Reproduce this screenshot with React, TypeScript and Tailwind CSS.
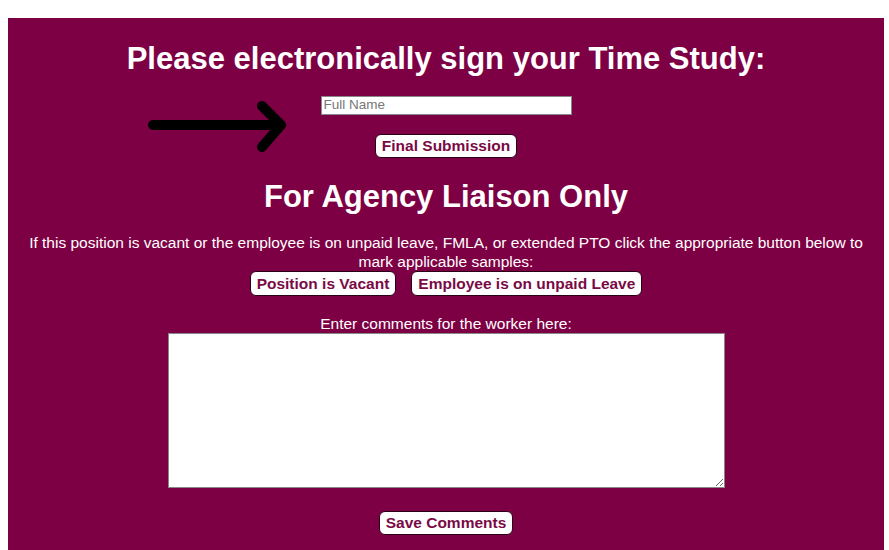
import React from "react";

const btn =
  "bg-white text-[#7a0a45] font-bold text-[15.5px] leading-[18px] px-[6px] border border-[#2a0016] rounded-[6px] flex items-center justify-center";

export default function App() {
  return (
    <div className="w-[889px] h-[550px] bg-white overflow-hidden" style={{ fontFamily: '"Liberation Sans", Arial, sans-serif' }}>
      <div className="relative mt-[18px] ml-2 mr-[5px] h-[532px] bg-[#7e0044] text-white flex flex-col items-center">
        <h1 className="mt-[23px] text-[31px] leading-[36px] font-bold">Please electronically sign your Time Study:</h1>
        <input
          placeholder="Full Name"
          className="mt-[19px] w-[251px] h-[19px] bg-white border border-[#888] px-[2px] text-[13.5px] text-black placeholder:text-[#777]"
        />
        <svg className="absolute left-[132px] top-[72px]" width="160" height="75" viewBox="0 0 160 75">
          <path d="M13 35 H141 M122 16 L141 35 L122 57" fill="none" stroke="#000" strokeWidth="10" strokeLinecap="round" strokeLinejoin="round" />
        </svg>
        <button className={`${btn} mt-[19px] h-[24px]`}>Final Submission</button>
        <h2 className="mt-[21px] text-[31px] leading-[36px] font-bold">For Agency Liaison Only</h2>
        <p className="mt-[18px] px-[16px] text-[15.5px] leading-[19px] text-center">
          If this position is vacant or the employee is on unpaid leave, FMLA, or extended PTO click the appropriate button below to mark applicable samples:
        </p>
        <div className="flex gap-[15px]">
          <button className={`${btn} h-[25px]`}>Position is Vacant</button>
          <button className={`${btn} h-[25px]`}>Employee is on unpaid Leave</button>
        </div>
        <label className="mt-[18px] text-[15.5px] leading-[19px]">Enter comments for the worker here:</label>
        <textarea className="w-[557px] h-[155px] bg-white border border-[#888] text-black" />
        <button className={`${btn} mt-[23px] h-[24px]`}>Save Comments</button>
      </div>
    </div>
  );
}
